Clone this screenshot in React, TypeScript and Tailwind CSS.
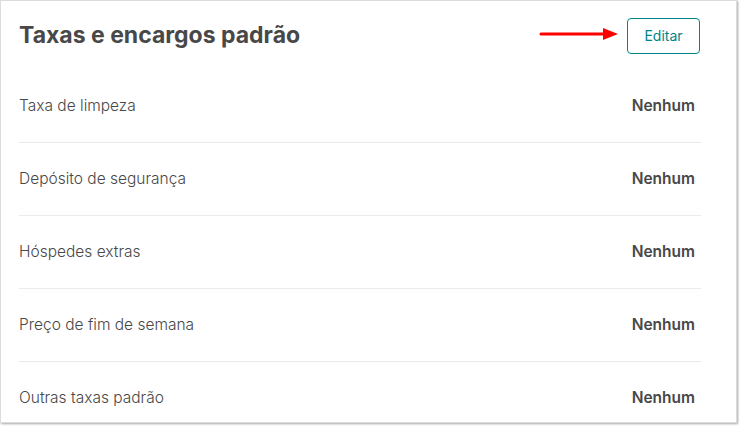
const rows = [
  'Taxa de limpeza',
  'Depósito de segurança',
  'Hóspedes extras',
  'Preço de fim de semana',
  'Outras taxas padrão',
];

export default function App() {
  return (
    <div className="w-[740px] h-[427px] bg-white overflow-hidden" style={{ fontFamily: 'Inter, "Liberation Sans", sans-serif' }}>
      <div className="w-[737px] h-[423px] bg-white border border-[#dcdcdc] shadow-[1px_1px_2px_rgba(0,0,0,0.35)] overflow-hidden">
        <div className="flex items-center justify-between pl-[18px] pr-[36px] h-[68px]">
          <h2 className="text-[23px] font-bold text-[#484848] mt-[1px]">Taxas e encargos padrão</h2>
          <div className="flex items-center gap-[8px]">
            <svg width="80" height="14" viewBox="0 0 80 14" className="mt-[-2px]">
              <line x1="2" y1="7" x2="66" y2="7" stroke="#f00" strokeWidth="3" strokeLinecap="round" />
              <polygon points="64,1 79,7 64,13" fill="#f00" />
            </svg>
            <button className="h-[36px] w-[73px] rounded-[4px] border border-[#008489] text-[14px] text-[#008489] mt-[1px]">
              Editar
            </button>
          </div>
        </div>
        <div className="pl-[18px] pr-[35px]">
          {rows.map((label, i) => (
            <div key={label} className={`flex items-center justify-between h-[73px] ${i > 0 ? 'border-t border-[#ebebeb]' : ''}`}>
              <span className="text-[15.5px] font-light text-[#484848]">{label}</span>
              <span className="text-[15.5px] font-semibold text-[#484848] pr-[6px]">Nenhum</span>
            </div>
          ))}
        </div>
      </div>
    </div>
  );
}
